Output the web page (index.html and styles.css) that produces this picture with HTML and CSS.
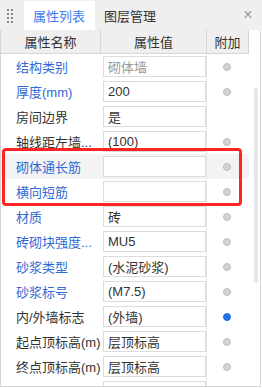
FILE: index.html
```html
<!DOCTYPE html>
<html lang="zh-CN">

<head>
  <meta charset="UTF-8">
  <meta name="viewport" content="width=device-width, initial-scale=1.0">
  <title>属性列表</title>
  <link rel="stylesheet" href="styles.css">
</head>

<body>
  <div class="tabbar">
    <span class="grip">
      <i></i><i></i><i></i><i></i><i></i><i></i><i></i><i></i>
    </span>
    <span class="tab active">属性列表</span>
    <span class="tab">图层管理</span>
    <span class="close">&times;</span>
  </div>

  <div class="panel">
    <div class="grid">
      <div class="row head">
        <div class="cell">属性名称</div>
        <div class="cell">属性值</div>
        <div class="cell">附加</div>
      </div>

      <div class="row">
        <div class="name blue">结构类别</div>
        <div class="value"><span class="box muted">砌体墙</span></div>
        <div class="extra"><span class="dot"></span></div>
      </div>
      <div class="row">
        <div class="name blue">厚度(mm)</div>
        <div class="value"><span class="box">200</span></div>
        <div class="extra"><span class="dot"></span></div>
      </div>
      <div class="row">
        <div class="name">房间边界</div>
        <div class="value"><span class="box">是</span></div>
        <div class="extra"></div>
      </div>
      <div class="row">
        <div class="name">轴线距左墙...</div>
        <div class="value"><span class="box">(100)</span></div>
        <div class="extra"><span class="dot"></span></div>
      </div>
      <div class="row selected">
        <div class="name blue">砌体通长筋</div>
        <div class="value"><span class="box"></span></div>
        <div class="extra"><span class="dot"></span></div>
      </div>
      <div class="row">
        <div class="name blue">横向短筋</div>
        <div class="value"><span class="box"></span></div>
        <div class="extra"><span class="dot"></span></div>
      </div>
      <div class="row">
        <div class="name blue">材质</div>
        <div class="value"><span class="box">砖</span></div>
        <div class="extra"><span class="dot"></span></div>
      </div>
      <div class="row">
        <div class="name blue">砖砌块强度...</div>
        <div class="value"><span class="box">MU5</span></div>
        <div class="extra"><span class="dot"></span></div>
      </div>
      <div class="row">
        <div class="name blue">砂浆类型</div>
        <div class="value"><span class="box">(水泥砂浆)</span></div>
        <div class="extra"><span class="dot"></span></div>
      </div>
      <div class="row">
        <div class="name blue">砂浆标号</div>
        <div class="value"><span class="box">(M7.5)</span></div>
        <div class="extra"><span class="dot"></span></div>
      </div>
      <div class="row">
        <div class="name">内/外墙标志</div>
        <div class="value"><span class="box">(外墙)</span></div>
        <div class="extra"><span class="dot on"></span></div>
      </div>
      <div class="row">
        <div class="name">起点顶标高(m)</div>
        <div class="value"><span class="box">层顶标高</span></div>
        <div class="extra"><span class="dot"></span></div>
      </div>
      <div class="row">
        <div class="name">终点顶标高(m)</div>
        <div class="value"><span class="box">层顶标高</span></div>
        <div class="extra"><span class="dot"></span></div>
      </div>
      <div class="row">
        <div class="name"></div>
        <div class="value"><span class="box"></span></div>
        <div class="extra"></div>
      </div>

      <!-- annotation over the two rebar rows -->
      <div class="mark"></div>
    </div>

    <div class="scrollbar">
      <div class="thumb"></div>
    </div>
  </div>
</body>
</html>
```

FILE: styles.css
```css
:root {
  --bar-bg: #efefef;
  --line: #d6d6d6;
  --box-line: #dcdcdc;
  --blue: #2f6ad6;
  --text: #333;
}

* {
  box-sizing: border-box;
}

body {
  margin: 0;
  width: 262px;
  height: 388px;
  overflow: hidden;
  background: #fff;
  font-family: "Liberation Sans", "Noto Sans CJK SC", sans-serif;
  font-size: 13px;
  color: var(--text);
}

.tabbar {
  display: flex;
  align-items: stretch;
  height: 30px;
  padding-top: 1px;
  background: var(--bar-bg);
}

.grip {
  display: grid;
  grid-template-columns: 2px 2px;
  grid-auto-rows: 2px;
  column-gap: 2px;
  row-gap: 2px;
  align-content: center;
  width: 24px;
  padding-left: 7px;
}

.grip i {
  background: #8a8a8a;
}

.tab {
  display: flex;
  align-items: center;
  padding: 0 10px 0 9px;
}

.tab.active {
  background: #fff;
  color: #3b7cf0;
}

.close {
  margin-left: auto;
  width: 28px;
  display: flex;
  align-items: center;
  justify-content: center;
  color: #9a9a9a;
  font-size: 16px;
  padding-bottom: 2px;
}

.panel {
  display: flex;
  width: 261px;
  height: 357px;
  border: 1px solid var(--line);
  border-top: 0;
  overflow: hidden;
}

.grid {
  position: relative;
  width: 248px;
}

.row {
  display: grid;
  grid-template-columns: 100px 106px 41px;
  height: 25px;
}

.row.head {
  height: 24px;
  background: var(--bar-bg);
  border-bottom: 1px solid var(--line);
  border-right: 1px solid var(--line);
}

.head .cell {
  display: flex;
  align-items: center;
  justify-content: center;
  border-right: 1px solid var(--line);
}

.head .cell:last-child {
  border-right: 0;
}

.row.selected {
  background: #f3f3f3;
}

.name {
  display: flex;
  align-items: center;
  padding-left: 15px;
  white-space: nowrap;
  overflow: hidden;
}

.name.blue {
  color: var(--blue);
}

.value {
  display: flex;
  align-items: center;
  padding-left: 2px;
  border-right: 1px solid #e6e6e6;
}

.box {
  display: flex;
  align-items: center;
  width: 104px;
  height: 21px;
  padding-left: 4px;
  background: #fff;
  border: 1px solid var(--box-line);
  white-space: nowrap;
  overflow: hidden;
}

.box.muted {
  color: #999;
}

.extra {
  display: flex;
  align-items: center;
  justify-content: center;
  padding-right: 1px;
}

.dot {
  width: 8px;
  height: 8px;
  border-radius: 50%;
  background: #d3d3d6;
  border: 1px solid #bdbdc2;
}

.dot.on {
  background: #1f74ea;
  border-color: #1f6ae0;
}

.mark {
  position: absolute;
  left: 1px;
  top: 118px;
  width: 240px;
  height: 58px;
  border: 3px solid #ff2424;
  border-radius: 4px;
}

.scrollbar {
  flex: 1;
  padding: 58px 0 0 5px;
}

.thumb {
  width: 4px;
  height: 195px;
  border-radius: 2px;
  background: #e6e6e6;
}
```
